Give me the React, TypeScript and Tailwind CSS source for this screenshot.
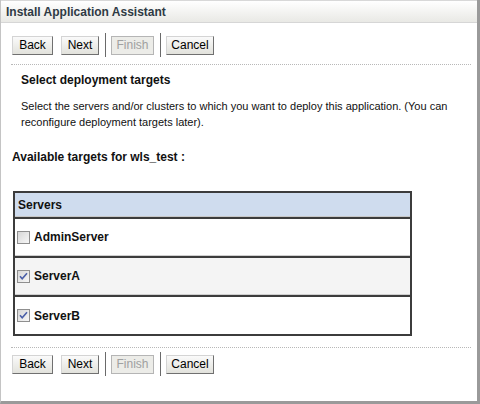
import React from 'react';

const servers = [
    { name: 'AdminServer', checked: false, shade: false },
    { name: 'ServerA', checked: true, shade: true },
    { name: 'ServerB', checked: true, shade: false },
];

function Checkbox({ checked }: { checked: boolean }) {
    return (
        <svg width="13" height="13" viewBox="0 0 13 13" className="shrink-0">
            <defs>
                <linearGradient id="cbg" x1="0" y1="0" x2="1" y2="1">
                    <stop offset="0" stopColor="#d6d6d6" />
                    <stop offset="1" stopColor="#f8f8f8" />
                </linearGradient>
            </defs>
            <rect x="0.5" y="0.5" width="12" height="12" fill="url(#cbg)" stroke="#8f8f8f" />
            {checked && (
                <path d="M3 6.2 L5.2 8.8 L10 3.2" fill="none" stroke="#4a5fa8" strokeWidth="1.6" />
            )}
        </svg>
    );
}

function Btn({ label, width, disabled }: { label: string; width: string; disabled?: boolean }) {
    return (
        <button
            className={
                disabled
                    ? `${width} h-[19px] border border-[#b5b5b5] bg-[#ecece8] text-[#a0a0a0] text-[12px] leading-none`
                    : `${width} h-[19px] border border-t-[#d4d4d4] border-l-[#d4d4d4] border-r-[#707070] border-b-[#707070] bg-gradient-to-b from-[#fafafa] to-[#e2e2dc] text-black text-[12px] leading-none`
            }
        >
            {label}
        </button>
    );
}

function ButtonBar() {
    return (
        <div className="flex items-center pl-[11px] h-[24px]">
            <Btn label="Back" width="w-[41px]" />
            <div className="w-[8px]" />
            <Btn label="Next" width="w-[38px]" />
            <div className="w-[1px] h-[24px] bg-[#6a6a6a] ml-[6px] mr-[5px]" />
            <Btn label="Finish" width="w-[43px]" disabled />
            <div className="w-[1px] h-[24px] bg-[#6a6a6a] ml-[6px] mr-[5px]" />
            <Btn label="Cancel" width="w-[48px]" />
        </div>
    );
}

function Dotted() {
    return <div className="ml-[10px] w-[460px] border-t border-dotted border-[#b8b8b8]" />;
}

export default function App() {
    return (
        <div
            className="w-[480px] h-[404px] bg-white border-l border-l-[#c4c4c4] border-r-[3px] border-r-[#9a9a9a] border-b-[3px] border-b-[#9a9a9a] flex flex-col text-[#111]"
            style={{ fontFamily: '"Liberation Sans", Arial, sans-serif' }}
        >
            <div className="h-[23px] shrink-0 border-t border-[#d8d8d8] border-b border-b-[#d6d6d6] bg-gradient-to-b from-white to-[#e9e9e5] flex items-center pl-[5px]">
                <span className="text-[12px] font-bold text-[#2e3a44]">Install Application Assistant</span>
            </div>

            <div className="mt-[10px]">
                <ButtonBar />
            </div>
            <div className="mt-[7px]">
                <Dotted />
            </div>

            <div className="pl-[20px] pt-[7px]">
                <div className="text-[12px] font-bold leading-[16px]">Select deployment targets</div>
                <p className="mt-[10px] text-[11px] leading-[16px] w-[452px]">
                    Select the servers and/or clusters to which you want to deploy this application. (You can
                    reconfigure deployment targets later).
                </p>
            </div>

            <div className="pl-[11px] mt-[19px] text-[12px] font-bold leading-[16px]">Available targets for wls_test :</div>

            <div className="ml-[12px] mt-[26px] w-[399px] border-2 border-[#3c3c3c]">
                <div className="h-[24px] bg-[#cfdcee] border-b border-[#c8c8c8] flex items-center pl-[3px]">
                    <span className="text-[12px] font-bold">Servers</span>
                </div>
                {servers.map((s) => (
                    <div
                        key={s.name}
                        className={`h-[39px] border-t-2 border-t-[#3c3c3c] border-b border-b-[#cfcfcf] last:border-b-0 flex items-center pl-[2px] gap-[4px] ${s.shade ? 'bg-[#f4f4f4]' : 'bg-white'}`}
                    >
                        <Checkbox checked={s.checked} />
                        <span className="text-[12px] font-bold">{s.name}</span>
                    </div>
                ))}
            </div>

            <div className="mt-[11px]">
                <Dotted />
            </div>
            <div className="mt-[4px]">
                <ButtonBar />
            </div>
        </div>
    );
}
